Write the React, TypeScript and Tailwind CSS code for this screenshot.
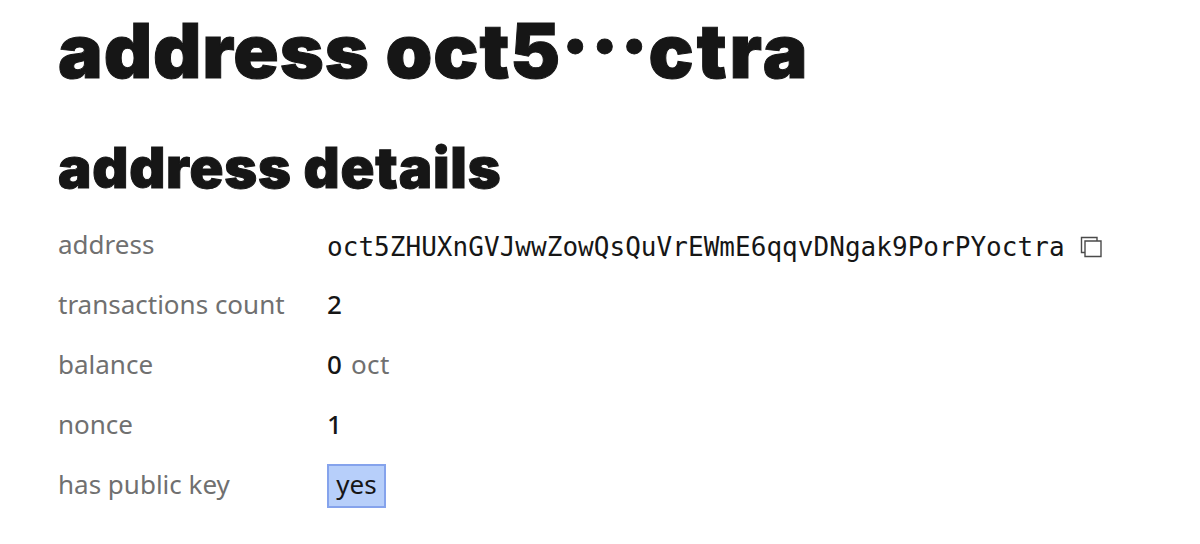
import type { ReactNode } from 'react';

function CopyIcon() {
  return (
    <svg width="22" height="22" viewBox="0 0 22 22" fill="none" stroke="#4a4a4a" strokeWidth="1.4">
      <path d="M5 16.5H1.5V1.5H17V5" />
      <path d="M5 5H21V20.5H5Z" />
    </svg>
  );
}

function Row({ label, children }: { label: string; children: ReactNode }) {
  return (
    <div className="flex h-[60px] items-center">
      <dt className="w-[269px] shrink-0 pb-[2px] text-[#707070]">{label}</dt>
      <dd className="flex items-center text-[#161616]">{children}</dd>
    </div>
  );
}

export default function App() {
  return (
    <main className="h-[544px] w-[1200px] overflow-hidden bg-white pl-[58px] font-['Noto_Sans',sans-serif] text-[26px] leading-[36px] text-[#161616]">
      <h1 className="mt-[5px] h-[92px] whitespace-nowrap font-['Inter',sans-serif] text-[75px] leading-[92px] font-black tracking-[0.9px] [-webkit-text-stroke:1px_#161616]">
        address oct5
        <span className="mr-[-1px] inline-block -translate-y-[6px] tracking-[1.5px]">···</span>
        <span className="tracking-[2.8px]">ctra</span>
      </h1>
      <h2 className="mt-[36px] h-[70px] whitespace-nowrap font-['Inter',sans-serif] text-[56px] leading-[70px] font-black tracking-[0.8px] [-webkit-text-stroke:1px_#161616]">
        address details
      </h2>
      <dl className="mt-[12px]">
        <Row label="address">
          <span className="pt-[4px] font-['DejaVu_Sans_Mono',monospace] tracking-[0.04px]">
            oct5ZHUXnGVJwwZowQsQuVrEWmE6qqvDNgak9PorPYoctra
          </span>
          <button className="ml-[15px] pt-[3px]" aria-label="copy">
            <CopyIcon />
          </button>
        </Row>
        <Row label="transactions count">
          <span className="pb-[2px] font-medium">2</span>
        </Row>
        <Row label="balance">
          <span className="pb-[2px] font-medium">0</span>
          <span className="ml-[9px] pb-[2px] tracking-[0.5px] text-[#707070]">oct</span>
        </Row>
        <Row label="nonce">
          <span className="pb-[2px] font-medium">1</span>
        </Row>
        <Row label="has public key">
          <span className="mt-px flex h-[44px] w-[59px] items-center justify-center border-2 border-[#85a3ec] bg-[#b7cffa] pb-[3px]">
            yes
          </span>
        </Row>
      </dl>
    </main>
  );
}
